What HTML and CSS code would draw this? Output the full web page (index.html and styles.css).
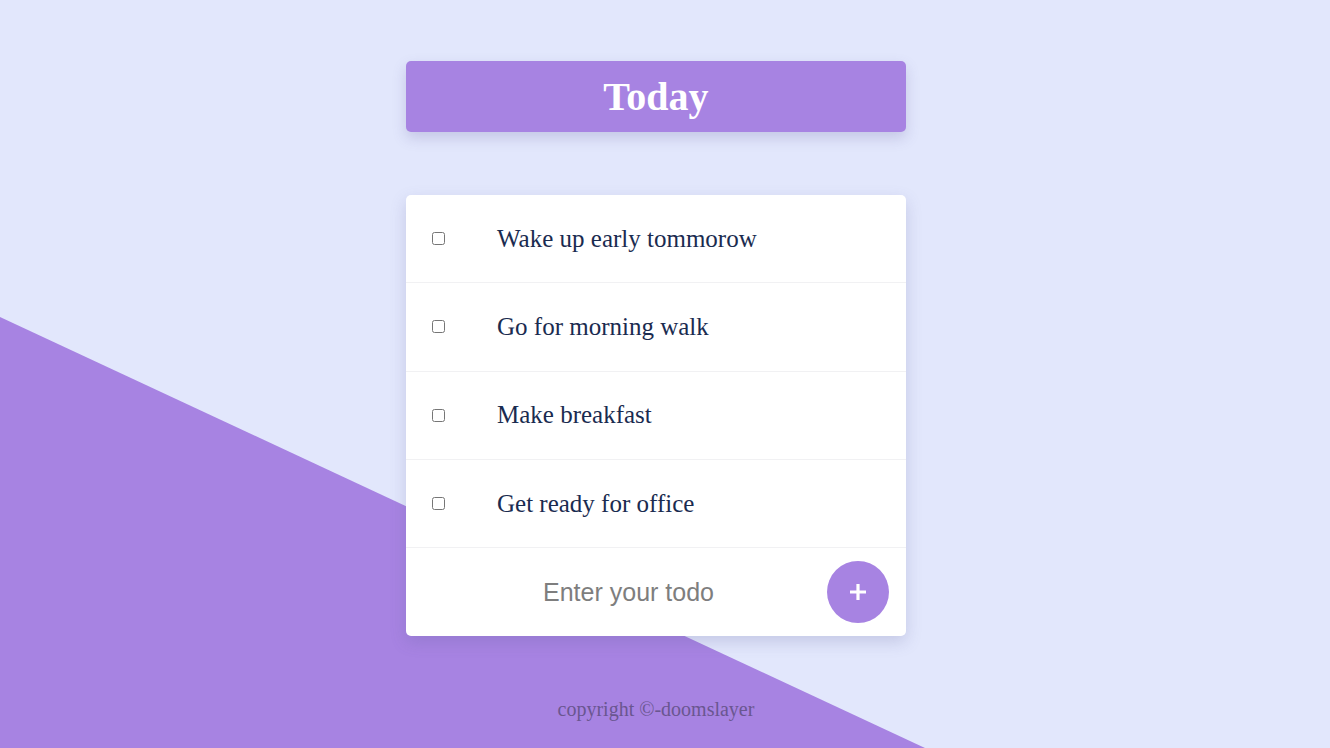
FILE: index.html
```html
<!DOCTYPE html>
<html>
<head>
<meta charset="utf-8">
<link rel="stylesheet" href="styles.css">
</head>
<body>
<div class="bg-shape"></div>
<main class="app">
  <header class="title"><h1>Today</h1></header>
  <section class="card">
    <div class="item"><input type="checkbox" class="check"><span class="label">Wake up early tommorow</span></div>
    <div class="item"><input type="checkbox" class="check"><span class="label">Go for morning walk</span></div>
    <div class="item"><input type="checkbox" class="check"><span class="label">Make breakfast</span></div>
    <div class="item"><input type="checkbox" class="check"><span class="label">Get ready for office</span></div>
    <form class="add-row" onsubmit="return false">
      <input type="text" class="todo-input" placeholder="Enter your todo">
      <button type="button" class="add-btn" aria-label="Add">
        <svg width="20" height="20" viewBox="0 0 20 20"><path d="M10 2v16M2 10h16" stroke="#fff" stroke-width="3.2" stroke-linecap="butt"/></svg>
      </button>
    </form>
  </section>
  <footer class="footer">copyright ©-doomslayer</footer>
</main>
</body>
</html>
```
FILE: styles.css
```css
html, body {
  margin: 0;
  padding: 0;
  height: 100%;
}
body {
  background: #e2e7fc;
  font-family: "Liberation Serif", "Times New Roman", serif;
  overflow: hidden;
  position: relative;
}
.bg-shape {
  position: absolute;
  left: 0;
  top: 0;
  width: 1330px;
  height: 748px;
  background: #a783e2;
  clip-path: polygon(0 317px, 925px 748px, 0 748px);
  z-index: 0;
}
.app {
  position: relative;
  z-index: 1;
  width: 1312px;
  display: flex;
  flex-direction: column;
  align-items: center;
  padding-top: 61px;
}
.title {
  width: 500px;
  height: 71px;
  background: #a783e2;
  border-radius: 5px;
  box-shadow: 0 6px 14px rgba(90, 80, 150, 0.22);
  display: flex;
  align-items: center;
  justify-content: center;
}
.title h1 {
  margin: 0;
  color: #fff;
  font-size: 40px;
  font-weight: bold;
  line-height: 1;
}
.card {
  margin-top: 63px;
  width: 500px;
  background: #fff;
  border-radius: 5px;
  box-shadow: 0 6px 16px rgba(90, 90, 150, 0.22);
  overflow: hidden;
}
.item {
  height: 87.3px;
  display: flex;
  align-items: center;
  border-bottom: 1px solid #f1f1f3;
}
.check {
  margin: 0 0 0 26px;
  width: 13px;
  height: 13px;
}
.label {
  margin-left: 52px;
  font-size: 25px;
  color: #1a2b50;
}
.add-row {
  height: 88px;
  margin: 0;
  display: flex;
  align-items: center;
}
.todo-input {
  flex: 1;
  min-width: 0;
  border: none;
  outline: none;
  background: transparent;
  font-family: "Liberation Sans", Arial, sans-serif;
  font-size: 25px;
  text-align: center;
  padding: 0;
  margin-left: 34px;
  color: #333;
}
.todo-input::placeholder {
  color: #7e7e7e;
}
.add-btn {
  width: 62px;
  height: 62px;
  border-radius: 50%;
  border: none;
  background: #a783e2;
  margin: 0 17px 0 10px;
  padding: 0;
  display: flex;
  align-items: center;
  justify-content: center;
  cursor: pointer;
}
.footer {
  margin-top: 62px;
  font-size: 20px;
  color: #6a5690;
}
```
